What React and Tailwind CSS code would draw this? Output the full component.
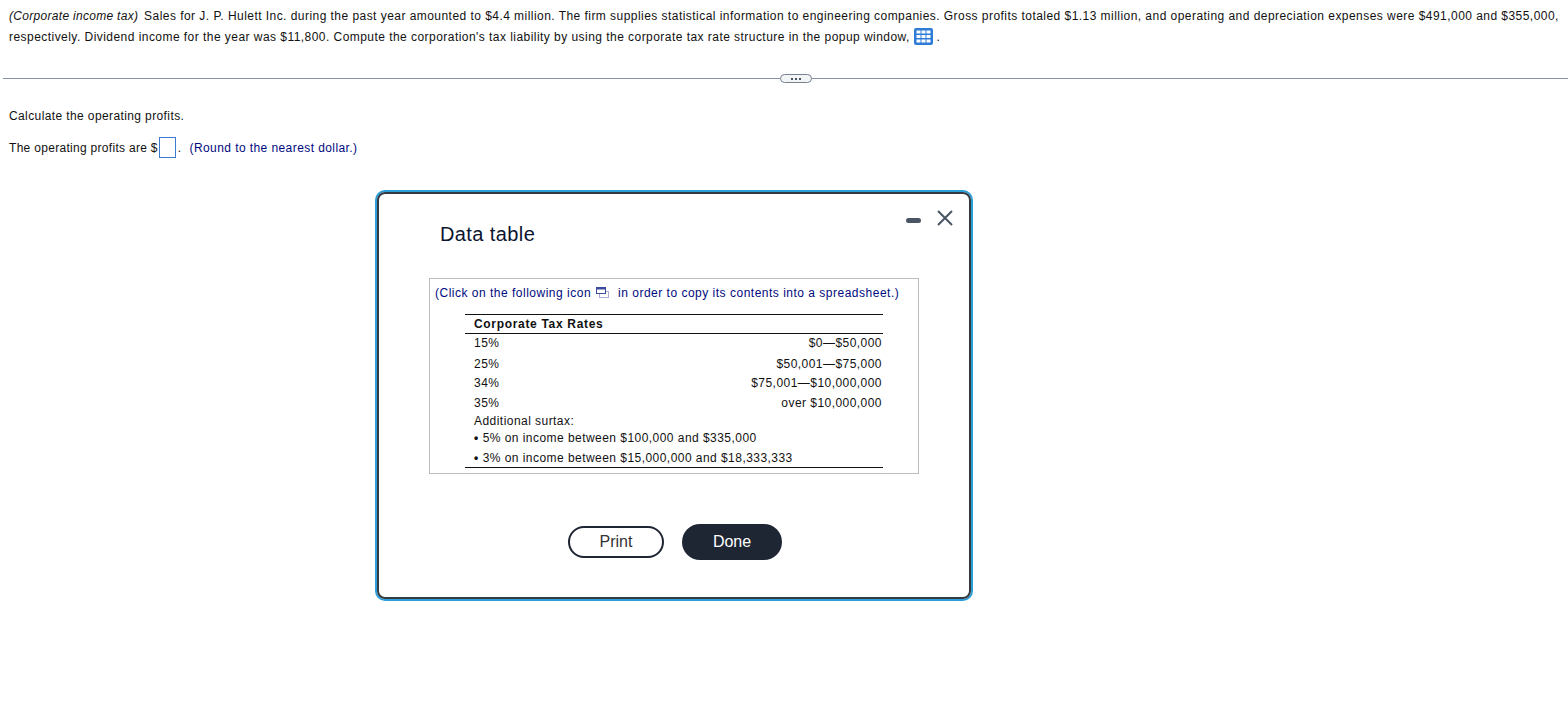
import React from "react";

const rates = [
  ["15%", "$0—$50,000", "h-[21px]"],
  ["25%", "$50,001—$75,000", "h-[19px]"],
  ["34%", "$75,001—$10,000,000", "h-[20px]"],
  ["35%", "over $10,000,000", "h-[18px]"],
];

function GridIcon() {
  return (
    <svg width="19" height="17" viewBox="0 0 19 17" className="inline-block align-[-4px]">
      <rect x="0" y="0" width="19" height="17" rx="2" fill="#2f7bd8" />
      {[2.5, 7, 11.5].map((y) =>
        [2.5, 7.5, 12.5].map((x) => <rect key={`${x}-${y}`} x={x} y={y} width="4" height="3" fill="#fff" />)
      )}
    </svg>
  );
}

function CopyIcon() {
  return (
    <svg width="13" height="11" viewBox="0 0 13 11" className="inline-block">
      <rect x="3.5" y="4.5" width="9" height="6" fill="#fff" stroke="#a9acd6" />
      <rect x="0.5" y="0.5" width="9" height="6" fill="#fff" stroke="#3b4a9c" />
      <rect x="0.5" y="0.5" width="9" height="2" fill="#3b4a9c" />
    </svg>
  );
}

export default function App() {
  return (
    <div className="relative h-[720px] w-[1568px] overflow-hidden bg-white font-['Liberation_Sans',Arial,sans-serif] text-[12px] tracking-[0.455px] text-[#111]">
      <div className="pl-[9px] pt-[6px] leading-[21px] whitespace-nowrap">
        <p>
          <span className="mr-[2px] italic tracking-[0.3px]">(Corporate income tax)</span> Sales for J. P. Hulett Inc. during the past year amounted to $4.4 million. The firm supplies statistical information to engineering companies. Gross profits totaled $1.13 million, and operating and depreciation expenses were $491,000 and $355,000,
        </p>
        <p>
          respectively. Dividend income for the year was $11,800. Compute the corporation's tax liability by using the corporate tax rate structure in the popup window, <GridIcon /> .
        </p>
      </div>

      <div className="relative ml-[3px] mt-[30px] h-px bg-[#8793a6]">
        <div className="absolute left-[777px] top-[-4px] flex h-[9px] w-[32px] items-center justify-center gap-[2px] rounded-full border border-[#76838f] bg-[#f2f4f6]">
          <span className="h-[2px] w-[2px] bg-[#4a5563]" />
          <span className="h-[2px] w-[2px] bg-[#4a5563]" />
          <span className="h-[2px] w-[2px] bg-[#4a5563]" />
        </div>
      </div>

      <p className="ml-[9px] mt-[27px] leading-[21px] tracking-[0.39px]">Calculate the operating profits.</p>
      <div className="ml-[9px] mt-[10px] flex h-[21px] items-center whitespace-nowrap tracking-[0.3px]">
        <span>The operating profits are $</span>
        <span className="ml-[1px] h-[21px] w-[17px] border border-[#3d7bd0] bg-white" />
        <span className="ml-[2px]">.</span>
        <span className="ml-[8px] tracking-[0.42px] text-[#000a80]">(Round to the nearest dollar.)</span>
      </div>

      <div className="absolute left-[375px] top-[190px] h-[411px] w-[598px] rounded-[10px] border-2 border-[#2c9fd8]">
        <div className="h-full rounded-[8px] border-2 border-[#333a42] bg-white">
          <div className="flex h-[84px] items-start justify-between pl-[61px] pr-[16px]">
            <h2 className="mt-[27px] text-[20px] leading-[26px] tracking-[0.4px] text-[#0b1530]">Data table</h2>
            <div className="mt-[16px] flex items-center gap-[16px]">
              <span className="mt-[5px] h-[5px] w-[15px] rounded-full bg-[#4a5563]" />
              <svg width="16" height="16" viewBox="0 0 16 16" fill="none" stroke="#4a5563" strokeWidth="2">
                <path d="M1 1 L15 15 M15 1 L1 15" />
              </svg>
            </div>
          </div>

          <div className="ml-[50px] h-[196px] w-[490px] border border-[#bdbdbd] pl-[5px] pt-[4px]">
            <p className="flex h-[19px] items-center whitespace-nowrap tracking-[0.5px] text-[#000a80]">
              (Click on the following icon
              <span className="ml-[5px] mr-[9px] flex"><CopyIcon /></span>
              in order to copy its contents into a spreadsheet.)
            </p>
            <div className="ml-[30px] mt-[12px] w-[418px] border-y border-[#111]">
              <div className="h-[19px] border-b border-[#111] pl-[9px] font-bold leading-[19px] tracking-[0.68px]">Corporate Tax Rates</div>
              {rates.map(([pct, range, h]) => (
                <div key={pct} className={`flex items-start justify-between pl-[9px] pr-[1px] leading-[18px] ${h}`}>
                  <span>{pct}</span>
                  <span>{range}</span>
                </div>
              ))}
              <div className="h-[17px] pl-[9px] leading-[18px]">Additional surtax:</div>
              <div className="h-[20px] pl-[9px] leading-[18px]">
                <span className="mr-[4px] font-bold">•</span>5% on income between $100,000 and $335,000
              </div>
              <div className="h-[18px] pl-[9px] leading-[18px]">
                <span className="mr-[4px] font-bold">•</span>3% on income between $15,000,000 and $18,333,333
              </div>
            </div>
          </div>

          <div className="ml-[189px] mt-[50px] flex items-center gap-[18px] text-[16px] tracking-normal">
            <button className="h-[32px] w-[96px] rounded-full border-2 border-[#1e2533] bg-white text-[#333]">Print</button>
            <button className="h-[36px] w-[100px] rounded-full bg-[#1e2533] text-white">Done</button>
          </div>
        </div>
      </div>
    </div>
  );
}
